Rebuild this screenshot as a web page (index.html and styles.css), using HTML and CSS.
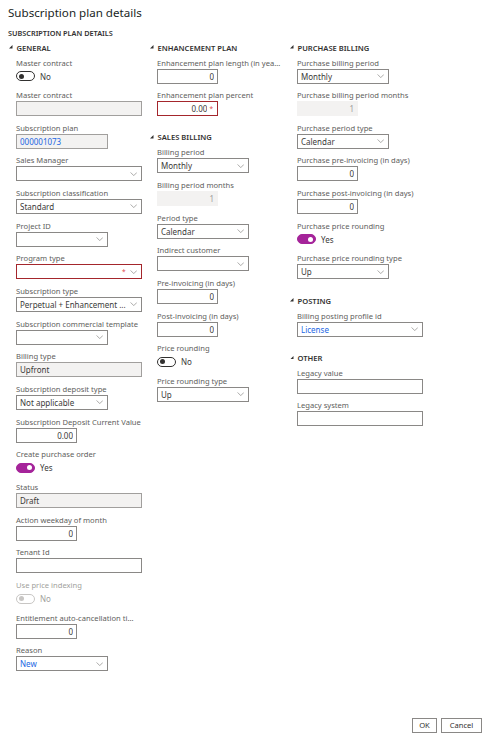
FILE: index.html
```html
<!DOCTYPE html>
<html>
<head>
<meta charset="utf-8">
<link rel="stylesheet" href="styles.css">
</head>
<body>
<div class="page">
  <h1 class="title">Subscription plan details</h1>
  <div class="group-title">SUBSCRIPTION PLAN DETAILS</div>
  <div class="columns">
    <div class="col">
      <div class="section">
        <div class="sec-head"><svg class="tri" viewBox="0 0 4 4"><polygon points="4,0 4,4 0,4"/></svg>GENERAL</div>
        <div class="field"><div class="lbl">Master contract</div><div class="tgl-row"><span class="tgl off"><span class="knob"></span></span><span class="tgl-txt">No</span></div></div>
        <div class="field"><div class="lbl">Master contract</div><div class="inp w-l ro"></div></div>
        <div class="field"><div class="lbl">Subscription plan</div><div class="inp w-m ro"><span class="val link">000001073</span></div></div>
        <div class="field"><div class="lbl">Sales Manager</div><div class="inp w-l dd"><span class="val"></span><svg class="chev" viewBox="0 0 8 5"><polyline points="0.5,0.5 4,4 7.5,0.5"/></svg></div></div>
        <div class="field"><div class="lbl">Subscription classification</div><div class="inp w-l dd"><span class="val">Standard</span><svg class="chev" viewBox="0 0 8 5"><polyline points="0.5,0.5 4,4 7.5,0.5"/></svg></div></div>
        <div class="field"><div class="lbl">Project ID</div><div class="inp w-m dd"><span class="val"></span><svg class="chev" viewBox="0 0 8 5"><polyline points="0.5,0.5 4,4 7.5,0.5"/></svg></div></div>
        <div class="field"><div class="lbl">Program type</div><div class="inp w-l dd err"><span class="val"></span><span class="req">*</span><svg class="chev" viewBox="0 0 8 5"><polyline points="0.5,0.5 4,4 7.5,0.5"/></svg></div></div>
        <div class="field"><div class="lbl">Subscription type</div><div class="inp w-l dd"><span class="val">Perpetual + Enhancement ...</span><svg class="chev" viewBox="0 0 8 5"><polyline points="0.5,0.5 4,4 7.5,0.5"/></svg></div></div>
        <div class="field"><div class="lbl">Subscription commercial template</div><div class="inp w-m dd"><span class="val"></span><svg class="chev" viewBox="0 0 8 5"><polyline points="0.5,0.5 4,4 7.5,0.5"/></svg></div></div>
        <div class="field"><div class="lbl">Billing type</div><div class="inp w-l ro"><span class="val">Upfront</span></div></div>
        <div class="field"><div class="lbl">Subscription deposit type</div><div class="inp w-m dd"><span class="val">Not applicable</span><svg class="chev" viewBox="0 0 8 5"><polyline points="0.5,0.5 4,4 7.5,0.5"/></svg></div></div>
        <div class="field"><div class="lbl">Subscription Deposit Current Value</div><div class="inp w-s num"><span class="val">0.00</span></div></div>
        <div class="field"><div class="lbl">Create purchase order</div><div class="tgl-row"><span class="tgl on"><span class="knob"></span></span><span class="tgl-txt">Yes</span></div></div>
        <div class="field"><div class="lbl">Status</div><div class="inp w-l ro"><span class="val">Draft</span></div></div>
        <div class="field"><div class="lbl">Action weekday of month</div><div class="inp w-s num"><span class="val">0</span></div></div>
        <div class="field"><div class="lbl">Tenant Id</div><div class="inp w-l"><span class="val"></span></div></div>
        <div class="field disabled"><div class="lbl">Use price indexing</div><div class="tgl-row"><span class="tgl off"><span class="knob"></span></span><span class="tgl-txt">No</span></div></div>
        <div class="field"><div class="lbl">Entitlement auto-cancellation ti...</div><div class="inp w-s num"><span class="val">0</span></div></div>
        <div class="field"><div class="lbl">Reason</div><div class="inp w-m dd"><span class="val link">New</span><svg class="chev" viewBox="0 0 8 5"><polyline points="0.5,0.5 4,4 7.5,0.5"/></svg></div></div>
      </div>
    </div>
    <div class="col">
      <div class="section">
        <div class="sec-head"><svg class="tri" viewBox="0 0 4 4"><polygon points="4,0 4,4 0,4"/></svg>ENHANCEMENT PLAN</div>
        <div class="field"><div class="lbl">Enhancement plan length (in yea...</div><div class="inp w-s num"><span class="val">0</span></div></div>
        <div class="field"><div class="lbl">Enhancement plan percent</div><div class="inp w-s num err"><span class="val">0.00</span><span class="req req-num">*</span></div></div>
      </div>
      <div class="section">
        <div class="sec-head"><svg class="tri" viewBox="0 0 4 4"><polygon points="4,0 4,4 0,4"/></svg>SALES BILLING</div>
        <div class="field"><div class="lbl">Billing period</div><div class="inp w-m dd"><span class="val">Monthly</span><svg class="chev" viewBox="0 0 8 5"><polyline points="0.5,0.5 4,4 7.5,0.5"/></svg></div></div>
        <div class="field"><div class="lbl">Billing period months</div><div class="inp w-s num flat"><span class="val">1</span></div></div>
        <div class="field"><div class="lbl">Period type</div><div class="inp w-m dd"><span class="val">Calendar</span><svg class="chev" viewBox="0 0 8 5"><polyline points="0.5,0.5 4,4 7.5,0.5"/></svg></div></div>
        <div class="field"><div class="lbl">Indirect customer</div><div class="inp w-m dd"><span class="val"></span><svg class="chev" viewBox="0 0 8 5"><polyline points="0.5,0.5 4,4 7.5,0.5"/></svg></div></div>
        <div class="field"><div class="lbl">Pre-invoicing (in days)</div><div class="inp w-s num"><span class="val">0</span></div></div>
        <div class="field"><div class="lbl">Post-invoicing (in days)</div><div class="inp w-s num"><span class="val">0</span></div></div>
        <div class="field"><div class="lbl">Price rounding</div><div class="tgl-row"><span class="tgl off"><span class="knob"></span></span><span class="tgl-txt">No</span></div></div>
        <div class="field"><div class="lbl">Price rounding type</div><div class="inp w-m dd"><span class="val">Up</span><svg class="chev" viewBox="0 0 8 5"><polyline points="0.5,0.5 4,4 7.5,0.5"/></svg></div></div>
      </div>
    </div>
    <div class="col">
      <div class="section">
        <div class="sec-head"><svg class="tri" viewBox="0 0 4 4"><polygon points="4,0 4,4 0,4"/></svg>PURCHASE BILLING</div>
        <div class="field"><div class="lbl">Purchase billing period</div><div class="inp w-m dd"><span class="val">Monthly</span><svg class="chev" viewBox="0 0 8 5"><polyline points="0.5,0.5 4,4 7.5,0.5"/></svg></div></div>
        <div class="field"><div class="lbl">Purchase billing period months</div><div class="inp w-s num flat"><span class="val">1</span></div></div>
        <div class="field"><div class="lbl">Purchase period type</div><div class="inp w-m dd"><span class="val">Calendar</span><svg class="chev" viewBox="0 0 8 5"><polyline points="0.5,0.5 4,4 7.5,0.5"/></svg></div></div>
        <div class="field"><div class="lbl">Purchase pre-invoicing (in days)</div><div class="inp w-s num"><span class="val">0</span></div></div>
        <div class="field"><div class="lbl">Purchase post-invoicing (in days)</div><div class="inp w-s num"><span class="val">0</span></div></div>
        <div class="field"><div class="lbl">Purchase price rounding</div><div class="tgl-row"><span class="tgl on"><span class="knob"></span></span><span class="tgl-txt">Yes</span></div></div>
        <div class="field"><div class="lbl">Purchase price rounding type</div><div class="inp w-m dd"><span class="val">Up</span><svg class="chev" viewBox="0 0 8 5"><polyline points="0.5,0.5 4,4 7.5,0.5"/></svg></div></div>
      </div>
      <div class="section">
        <div class="sec-head"><svg class="tri" viewBox="0 0 4 4"><polygon points="4,0 4,4 0,4"/></svg>POSTING</div>
        <div class="field"><div class="lbl">Billing posting profile id</div><div class="inp w-l dd"><span class="val link">License</span><svg class="chev" viewBox="0 0 8 5"><polyline points="0.5,0.5 4,4 7.5,0.5"/></svg></div></div>
      </div>
      <div class="section">
        <div class="sec-head"><svg class="tri" viewBox="0 0 4 4"><polygon points="4,0 4,4 0,4"/></svg>OTHER</div>
        <div class="field"><div class="lbl">Legacy value</div><div class="inp w-l"><span class="val"></span></div></div>
        <div class="field"><div class="lbl">Legacy system</div><div class="inp w-l"><span class="val"></span></div></div>
      </div>
    </div>
  </div>
  <div class="footer">
    <button class="btn">OK</button>
    <button class="btn">Cancel</button>
  </div>
</div>
</body>
</html>
```
FILE: styles.css
```css
html, body {
  margin: 0;
  padding: 0;
  background: #ffffff;
}
body {
  font-family: "Noto Sans", "Open Sans", sans-serif;
  color: #323130;
}
.page {
  display: flex;
  flex-direction: column;
  height: 741px;
  box-sizing: border-box;
  padding: 4px 10px 8px 8px;
}
.title {
  margin: 0;
  font-size: 11.6px;
  line-height: 18px;
  font-weight: 400;
  color: #201f1e;
}
.group-title {
  margin-top: 6px;
  font-size: 7.3px;
  line-height: 10px;
  font-weight: 600;
  color: #323130;
}
.columns {
  display: grid;
  grid-template-columns: 141px 140px 1fr;
  margin-top: 4.5px;
}
.section + .section {
  margin-top: 9.5px;
}
.sec-head {
  display: flex;
  align-items: center;
  font-size: 7.6px;
  line-height: 11px;
  font-weight: 600;
  color: #323130;
  margin-bottom: 4px;
}
.tri {
  width: 3.5px;
  height: 3.5px;
  fill: #323130;
  margin-left: 1px;
  margin-right: 4px;
  margin-top: -2px;
}
.field {
  padding-left: 8px;
  height: 32.67px;
}
.lbl {
  font-size: 7.6px;
  line-height: 11px;
  color: #605e5c;
  white-space: nowrap;
}
.field.disabled .lbl {
  color: #a19f9d;
}
.inp {
  box-sizing: border-box;
  height: 15px;
  border: 1px solid #8a8886;
  background: #ffffff;
  display: flex;
  align-items: center;
  padding: 0 3px 0 3px;
  font-size: 8px;
  font-weight: 400;
  color: #3b3a39;
}
.w-l { width: 126px; }
.w-m { width: 92px; }
.w-s { width: 61px; }
.inp.ro {
  background: #f3f2f1;
  border-color: #a19f9d;
}
.inp.flat {
  background: #f3f2f1;
  border-color: #f3f2f1;
  color: #a19f9d;
}
.inp.err {
  border-color: #a4262c;
}
.val {
  flex: 1;
  white-space: nowrap;
  overflow: hidden;
}
.num .val {
  text-align: right;
}
.link {
  color: #2266e3;
}
.req {
  color: #e0484e;
  font-size: 6.5px;
  margin-right: 4px;
  margin-top: -1px;
}
.req-num {
  margin-left: 2px;
  margin-right: 1px;
}
.chev {
  width: 7.5px;
  height: 4.5px;
  fill: none;
  stroke: #8a8886;
  stroke-width: 0.8;
  margin-right: 1px;
}
.tgl-row {
  display: flex;
  align-items: center;
  height: 15px;
}
.tgl {
  box-sizing: border-box;
  width: 19px;
  height: 10px;
  border-radius: 5px;
  border: 1px solid #323130;
  display: flex;
  align-items: center;
  padding: 0 2px;
}
.tgl .knob {
  width: 5px;
  height: 5px;
  border-radius: 50%;
  background: #323130;
}
.tgl.on {
  background: #a5249a;
  border-color: #a5249a;
  justify-content: flex-end;
}
.tgl.on .knob {
  background: #ffffff;
}
.field.disabled .tgl {
  border-color: #c8c6c4;
}
.field.disabled .tgl .knob {
  background: #c8c6c4;
}
.tgl-txt {
  margin-left: 5px;
  font-size: 8px;
  color: #3b3a39;
}
.field.disabled .tgl-txt {
  color: #a19f9d;
}
.footer {
  margin-top: auto;
  display: flex;
  justify-content: flex-end;
  gap: 4px;
}
.btn {
  box-sizing: border-box;
  height: 15px;
  padding: 0 5px;
  border: 1px solid #8a8886;
  background: #ffffff;
  font-family: "Noto Sans", "Open Sans", sans-serif;
  font-size: 7.6px;
  color: #323130;
  line-height: 13px;
}
.btn:first-child {
  width: 25px;
}
.btn:last-child {
  width: 41px;
}
```
